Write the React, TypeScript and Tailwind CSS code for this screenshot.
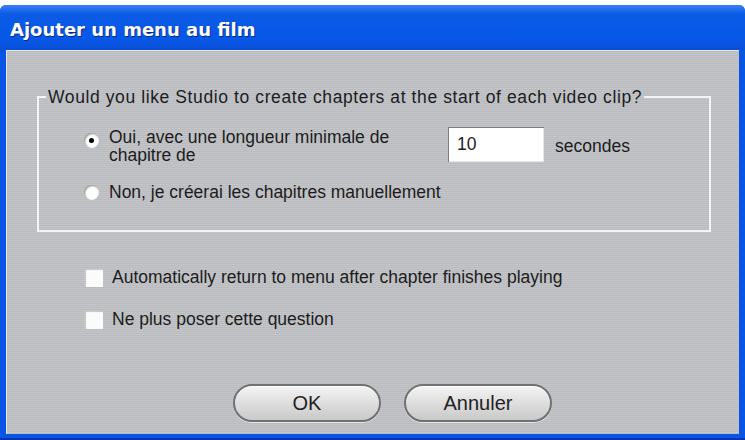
import React from "react";

function Radio({ checked }: { checked?: boolean }) {
  return (
    <span className="relative flex h-[15px] w-[15px] shrink-0 items-center justify-center rounded-full bg-white shadow-[inset_1px_1px_2px_rgba(0,0,0,0.45)]">
      {checked && <span className="h-[5px] w-[5px] rounded-full bg-black" />}
    </span>
  );
}

function Checkbox() {
  return (
    <span className="h-[19px] w-[19px] shrink-0 bg-[#fbfbfb] shadow-[inset_2px_2px_1px_rgba(0,0,0,0.22)]" />
  );
}

function PillButton({ label }: { label: string }) {
  return (
    <button className="flex h-[38px] w-[148px] items-center justify-center rounded-full border-2 border-[#6f7175] bg-[linear-gradient(to_bottom,#f4f4f4_0%,#dcdcdc_55%,#c9c9ca_100%)] text-[20px] text-[#222] shadow-[0_1px_0_#e8e8e8,inset_0_1px_0_#ffffff] [font-family:'Liberation_Sans',Arial,sans-serif]">
      {label}
    </button>
  );
}

export default function App() {
  return (
    <div className="flex h-[440px] w-[745px] flex-col bg-white [font-family:'Liberation_Sans',Arial,sans-serif]">
      <div className="mt-[5px] flex flex-1 flex-col rounded-t-[6px] bg-[#0a56e4] px-[6px] pb-[6px] shadow-[inset_0_-2px_0_#0836b0]">
        <div className="-mx-[6px] flex h-[45px] items-center rounded-t-[6px] bg-[linear-gradient(to_bottom,#3d7ff5_0%,#0b5be6_20%,#0757e8_75%,#0a4fd6_100%)] px-[10px] pt-[3px]">
          <span className="text-[18px] font-bold text-white [font-family:'DejaVu_Sans',Verdana,sans-serif] [text-shadow:1px_1px_0_#0a2a80]">
            Ajouter un menu au film
          </span>
        </div>
        <div className="flex flex-1 flex-col bg-[repeating-linear-gradient(to_bottom,#c4c5c9_0px,#c4c5c9_1px,#babbbf_1px,#babbbf_2px)] text-[17.5px] text-[#1c1c1c] shadow-[inset_1px_1px_0_#e8e8ea]">
          <fieldset className="ml-[31px] mr-[28px] mt-[38px] h-[144px] border-2 border-[#f4f4f4] pl-[45px]">
            <legend className="ml-[-38px] px-[2px] leading-[18px] tracking-[0.6px]">
              Would you like Studio to create chapters at the start of each video clip?
            </legend>
            <div className="mt-[21px] flex items-start">
              <div className="flex w-[364px] items-start gap-[10px]">
                <span className="mt-[6px]"><Radio checked /></span>
                <span className="mt-[1px] leading-[18px]">
                  Oui, avec une longueur minimale de
                  <br />
                  chapitre de
                </span>
              </div>
              <div className="flex h-[35px] w-[96px] items-center bg-white pl-[9px] shadow-[inset_1px_1px_0_#7d7d7d,inset_-1px_-1px_0_#e6e6e6]">
                10
              </div>
              <span className="ml-[11px] mt-[6px]">secondes</span>
            </div>
            <div className="mt-[19px] flex items-center gap-[10px]">
              <Radio />
              <span className="leading-[18px]">Non, je créerai les chapitres manuellement</span>
            </div>
          </fieldset>
          <div className="ml-[78px] mt-[36px] flex flex-col gap-[23px] leading-[19px]">
            <div className="flex items-center gap-[9px]">
              <Checkbox />
              <span>Automatically return to menu after chapter finishes playing</span>
            </div>
            <div className="flex items-center gap-[9px]">
              <Checkbox />
              <span>Ne plus poser cette question</span>
            </div>
          </div>
          <div className="mb-[12px] mt-auto flex justify-center gap-[23px] pl-[40px]">
            <PillButton label="OK" />
            <PillButton label="Annuler" />
          </div>
        </div>
      </div>
    </div>
  );
}
